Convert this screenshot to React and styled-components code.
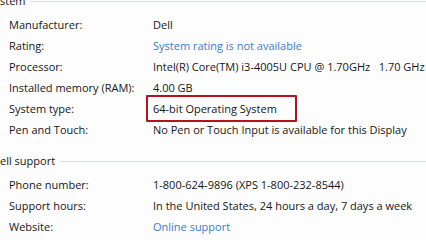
import React from 'react'
import styled, { createGlobalStyle } from 'styled-components'

const GlobalStyle = createGlobalStyle`
  html, body {
    margin: 0;
    padding: 0;
    background: #fdfdfd;
    overflow: hidden;
  }
  body {
    font-family: "Open Sans", "Noto Sans", sans-serif;
    color: #161616;
  }
`

const systemRows = [
  { label: 'Manufacturer:', value: 'Dell' },
  { label: 'Rating:', value: 'System rating is not available', link: true },
  { label: 'Processor:', value: 'Intel(R) Core(TM) i3-4005U CPU @ 1.70GHz\u00a0\u00a0 1.70 GHz' },
  { label: 'Installed memory (RAM):', value: '4.00 GB' },
  { label: 'System type:', value: '64-bit Operating System', marked: true },
  { label: 'Pen and Touch:', value: 'No Pen or Touch Input is available for this Display' },
]

const supportRows = [
  { label: 'Phone number:', value: '1-800-624-9896 (XPS 1-800-232-8544)' },
  { label: 'Support hours:', value: 'In the United States, 24 hours a day, 7 days a week' },
  { label: 'Website:', value: 'Online support', link: true },
]

const App = () => {
  return (
    <Page>
      <GlobalStyle />
      <Section $first>
        <Heading>
          <HeadingText>stem</HeadingText>
          <HeadingLine />
        </Heading>
        <Rows>
          {systemRows.map(r => (
            <Row key={r.label}>
              <Label>{r.label}</Label>
              <Value $link={r.link}>
                {r.value}
                {r.marked && <Marker />}
              </Value>
            </Row>
          ))}
        </Rows>
      </Section>
      <Section>
        <Heading>
          <HeadingText>ell support</HeadingText>
          <HeadingLine />
        </Heading>
        <Rows>
          {supportRows.map(r => (
            <Row key={r.label}>
              <Label>{r.label}</Label>
              <Value $link={r.link}>{r.value}</Value>
            </Row>
          ))}
        </Rows>
      </Section>
    </Page>
  )
}

export default App

const Page = styled.div`
  width: 426px;
  height: 240px;
  overflow: hidden;
  display: flex;
  flex-direction: column;
  font-size: 11px;
`

const Section = styled.div`
  margin-top: ${p => (p.$first ? '-7px' : '13px')};
`

const Heading = styled.div`
  display: flex;
  align-items: center;
  height: 15px;
  gap: 5px;
`

const HeadingText = styled.div`
  white-space: nowrap;
`

const HeadingLine = styled.div`
  flex-grow: 1;
  height: 1px;
  background: #d6dde3;
  margin-top: 2px;
`

const Rows = styled.div`
  display: flex;
  flex-direction: column;
  padding-top: 6px;
  padding-left: 9px;
`

const Row = styled.div`
  display: grid;
  grid-template-columns: 144px 1fr;
  height: 21px;
  align-items: center;
`

const Label = styled.div`
  white-space: nowrap;
`

const Value = styled.div`
  position: relative;
  white-space: nowrap;
  color: ${p => (p.$link ? '#3c7ac9' : '#161616')};
`

const Marker = styled.div`
  position: absolute;
  left: -7px;
  top: -6px;
  width: 147px;
  height: 23px;
  border: 2px solid #b5121f;
  border-radius: 1px;
`
